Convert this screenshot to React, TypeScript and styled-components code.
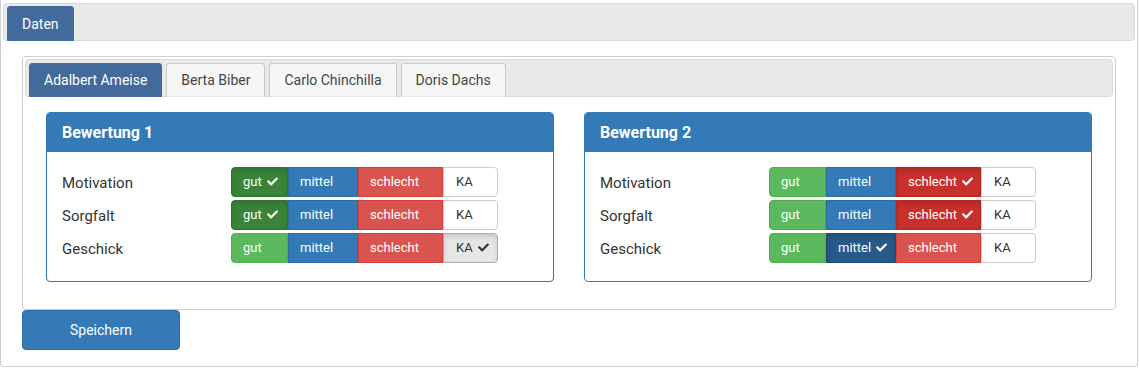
import styled, { createGlobalStyle, css } from 'styled-components';
import { FaCheck } from 'react-icons/fa';

const GlobalStyle = createGlobalStyle`
  body {
    margin: 0;
    background: #fff;
    font-family: Roboto, "Liberation Sans", sans-serif;
    color: #333;
  }
  * { box-sizing: border-box; }
`;

type Kind = 'gut' | 'mittel' | 'schlecht' | 'ka';

const palette: Record<Kind, { bg: string; border: string; activeBg: string; activeBorder: string; color: string; width: number }> = {
  gut: { bg: '#5cb85c', border: '#4cae4c', activeBg: '#398439', activeBorder: '#2f6f2f', color: '#fff', width: 57 },
  mittel: { bg: '#337ab7', border: '#2e6da4', activeBg: '#265a88', activeBorder: '#1f4b73', color: '#fff', width: 70 },
  schlecht: { bg: '#d9534f', border: '#d43f3a', activeBg: '#c9302c', activeBorder: '#ac2925', color: '#fff', width: 85 },
  ka: { bg: '#fff', border: '#ccc', activeBg: '#e6e6e6', activeBorder: '#adadad', color: '#333', width: 55 },
};

const Outer = styled.div`
  width: 1138px;
  border: 1px solid #cfcfcf;
  border-top: 0;
  border-radius: 0 0 4px 4px;
  padding: 3px 2px 16px;
`;

const TabNav = styled.div`
  display: flex;
  align-items: flex-end;
  gap: 4px;
  height: 38px;
  padding: 0 3px;
  background: #e9e9e9;
  border: 1px solid #dadada;
  border-radius: 4px;
`;

const Tab = styled.div<{ $active?: boolean }>`
  height: 34px;
  margin-bottom: -1px;
  padding: 0 14px;
  display: flex;
  align-items: center;
  font-size: 14px;
  border-radius: 3px 3px 0 0;
  ${(p) =>
    p.$active
      ? css`
          background: #426a9b;
          color: #fff;
          border: 1px solid #426a9b;
        `
      : css`
          background: #f6f6f6;
          color: #454545;
          border: 1px solid #c9c9c9;
          border-bottom-color: #e9e9e9;
        `}
`;

const OuterTab = styled(Tab)`
  height: 35px;
`;

const Content = styled.div`
  padding: 15px 19px 0 19px;
`;

const InnerPanel = styled.div`
  border: 1px solid #cfcfcf;
  border-radius: 4px;
  padding: 2px;
`;

const InnerContent = styled.div`
  display: grid;
  grid-template-columns: 508px 508px;
  gap: 30px;
  padding: 15px 20px 25px 21px;
`;

const Panel = styled.div`
  border: 1px solid #337ab7;
  border-radius: 4px;
  background: #fff;
  overflow: hidden;
`;

const PanelHeader = styled.div`
  height: 39px;
  display: flex;
  align-items: center;
  padding: 0 15px;
  background: #337ab7;
  color: #fff;
  font-size: 16px;
  font-weight: 700;
`;

const PanelBody = styled.div`
  display: flex;
  flex-direction: column;
  gap: 3px;
  padding: 15px 15px 18px;
`;

const Row = styled.div`
  display: flex;
  align-items: center;
  height: 30px;
`;

const Label = styled.div`
  width: 169px;
  font-size: 15px;
  color: #333;
  padding-top: 2px;
`;

const Group = styled.div`
  display: flex;
`;

const Choice = styled.div<{ $kind: Kind; $active: boolean }>`
  height: 30px;
  width: ${(p) => palette[p.$kind].width}px;
  display: flex;
  align-items: center;
  gap: 5px;
  padding: 0 0 2px 11px;
  font-size: 13px;
  color: ${(p) => palette[p.$kind].color};
  background: ${(p) => (p.$active ? palette[p.$kind].activeBg : palette[p.$kind].bg)};
  border: 1px solid ${(p) => (p.$active ? palette[p.$kind].activeBorder : palette[p.$kind].border)};
  box-shadow: ${(p) => (p.$active ? 'inset 0 3px 5px rgba(0,0,0,.125)' : 'none')};
  &:first-child {
    border-radius: 4px 0 0 4px;
  }
  &:last-child {
    border-radius: 0 4px 4px 0;
    padding-left: 12px;
  }
  svg {
    width: 11px;
    height: 11px;
  }
`;

const SaveButton = styled.button`
  width: 158px;
  height: 40px;
  margin: 0;
  display: block;
  background: #337ab7;
  border: 1px solid #2e6da4;
  border-radius: 4px;
  color: #fff;
  font-family: Roboto, "Liberation Sans", sans-serif;
  font-size: 14px;
`;

const rows: { label: string; value: Kind }[][] = [
  [
    { label: 'Motivation', value: 'gut' },
    { label: 'Sorgfalt', value: 'gut' },
    { label: 'Geschick', value: 'ka' },
  ],
  [
    { label: 'Motivation', value: 'schlecht' },
    { label: 'Sorgfalt', value: 'schlecht' },
    { label: 'Geschick', value: 'mittel' },
  ],
];

const choices: { kind: Kind; text: string }[] = [
  { kind: 'gut', text: 'gut' },
  { kind: 'mittel', text: 'mittel' },
  { kind: 'schlecht', text: 'schlecht' },
  { kind: 'ka', text: 'KA' },
];

const people = ['Adalbert Ameise', 'Berta Biber', 'Carlo Chinchilla', 'Doris Dachs'];

function App() {
  return (
    <>
      <GlobalStyle />
      <Outer>
        <TabNav>
          <OuterTab $active>Daten</OuterTab>
        </TabNav>
        <Content>
          <InnerPanel>
            <TabNav>
              {people.map((name, i) => (
                <Tab key={name} $active={i === 0}>
                  {name}
                </Tab>
              ))}
            </TabNav>
            <InnerContent>
              {rows.map((panelRows, idx) => (
                <Panel key={idx}>
                  <PanelHeader>Bewertung {idx + 1}</PanelHeader>
                  <PanelBody>
                    {panelRows.map((r) => (
                      <Row key={r.label}>
                        <Label>{r.label}</Label>
                        <Group>
                          {choices.map((c) => (
                            <Choice key={c.kind} $kind={c.kind} $active={r.value === c.kind}>
                              {c.text}
                              {r.value === c.kind && <FaCheck />}
                            </Choice>
                          ))}
                        </Group>
                      </Row>
                    ))}
                  </PanelBody>
                </Panel>
              ))}
            </InnerContent>
          </InnerPanel>
          <SaveButton>Speichern</SaveButton>
        </Content>
      </Outer>
    </>
  );
}

export default App;
